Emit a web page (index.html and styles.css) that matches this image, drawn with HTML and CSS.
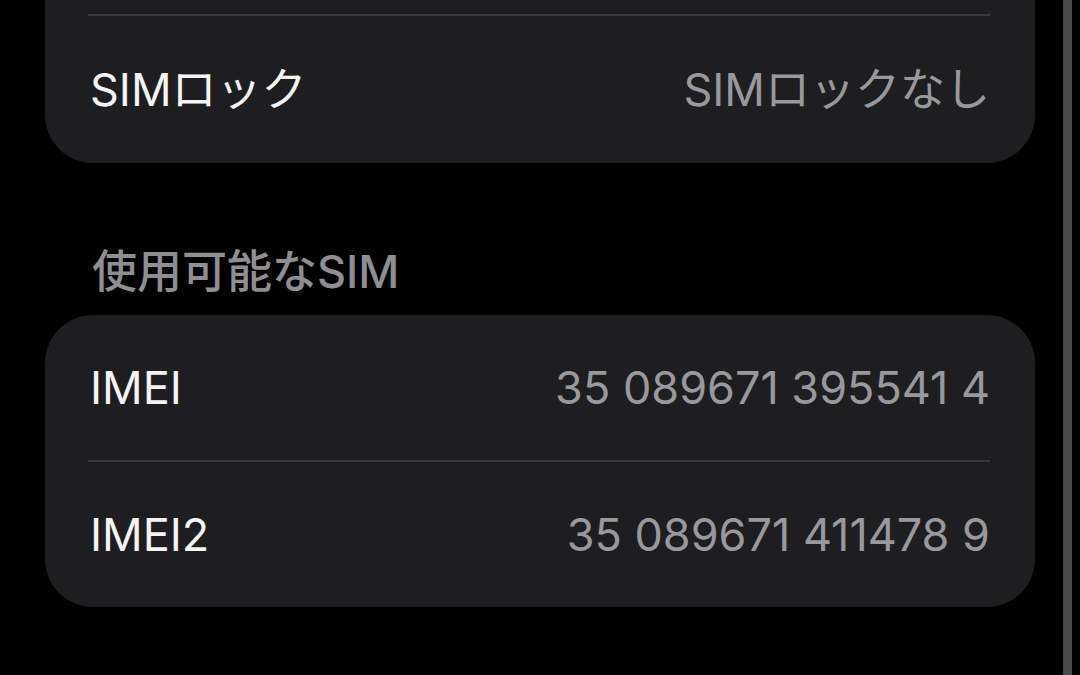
FILE: index.html
```html
<!DOCTYPE html>
<html lang="ja">
<head>
    <meta charset="UTF-8">
    <meta name="viewport" content="width=device-width, initial-scale=1.0">
    <title>SIM情報</title>
    <link rel="stylesheet" href="styles.css">
</head>
<body>
    <div class="screen">
        <div class="content">
            <div class="group group-top">
                <div class="row row-hidden"></div>
                <div class="row">
                    <span class="label">SIMロック</span>
                    <span class="value">SIMロックなし</span>
                </div>
            </div>

            <div class="section-title">使用可能なSIM</div>

            <div class="group">
                <div class="row">
                    <span class="label">IMEI</span>
                    <span class="value">35 089671 395541 4</span>
                </div>
                <div class="row">
                    <span class="label">IMEI2</span>
                    <span class="value">35 089671 411478 9</span>
                </div>
            </div>
        </div>
        <div class="edge"></div>
    </div>
</body>
</html>
```

FILE: styles.css
```css
body {
    margin: 0;
    background: #000;
    font-family: Inter, "Noto Sans CJK JP", sans-serif;
    color: #fff;
}

.screen {
    display: flex;
    height: 675px;
    overflow: hidden;
}

.content {
    flex: 1;
    padding: 0 28px 0 45px;
}

.edge {
    width: 9px;
    margin-right: 8px;
    background: #4a4a4c;
}

.group {
    background: #1e1e20;
    border-radius: 48px;
}

.group-top {
    margin-top: -133px;
}

.row {
    display: flex;
    align-items: center;
    justify-content: space-between;
    height: 145px;
    margin: 0 45px 0 43px;
    font-size: 45px;
    line-height: 1;
}

.row + .row {
    border-top: 2px solid #39393b;
}

.group-top .row {
    height: 147px;
}

.label {
    padding-left: 2px;
    color: #f4f4f6;
}

.value {
    color: #98989e;
}

.section-title {
    padding: 87px 0 21px 47px;
    font-size: 45px;
    line-height: 44px;
    font-weight: 500;
    color: #8e8e93;
}
```
